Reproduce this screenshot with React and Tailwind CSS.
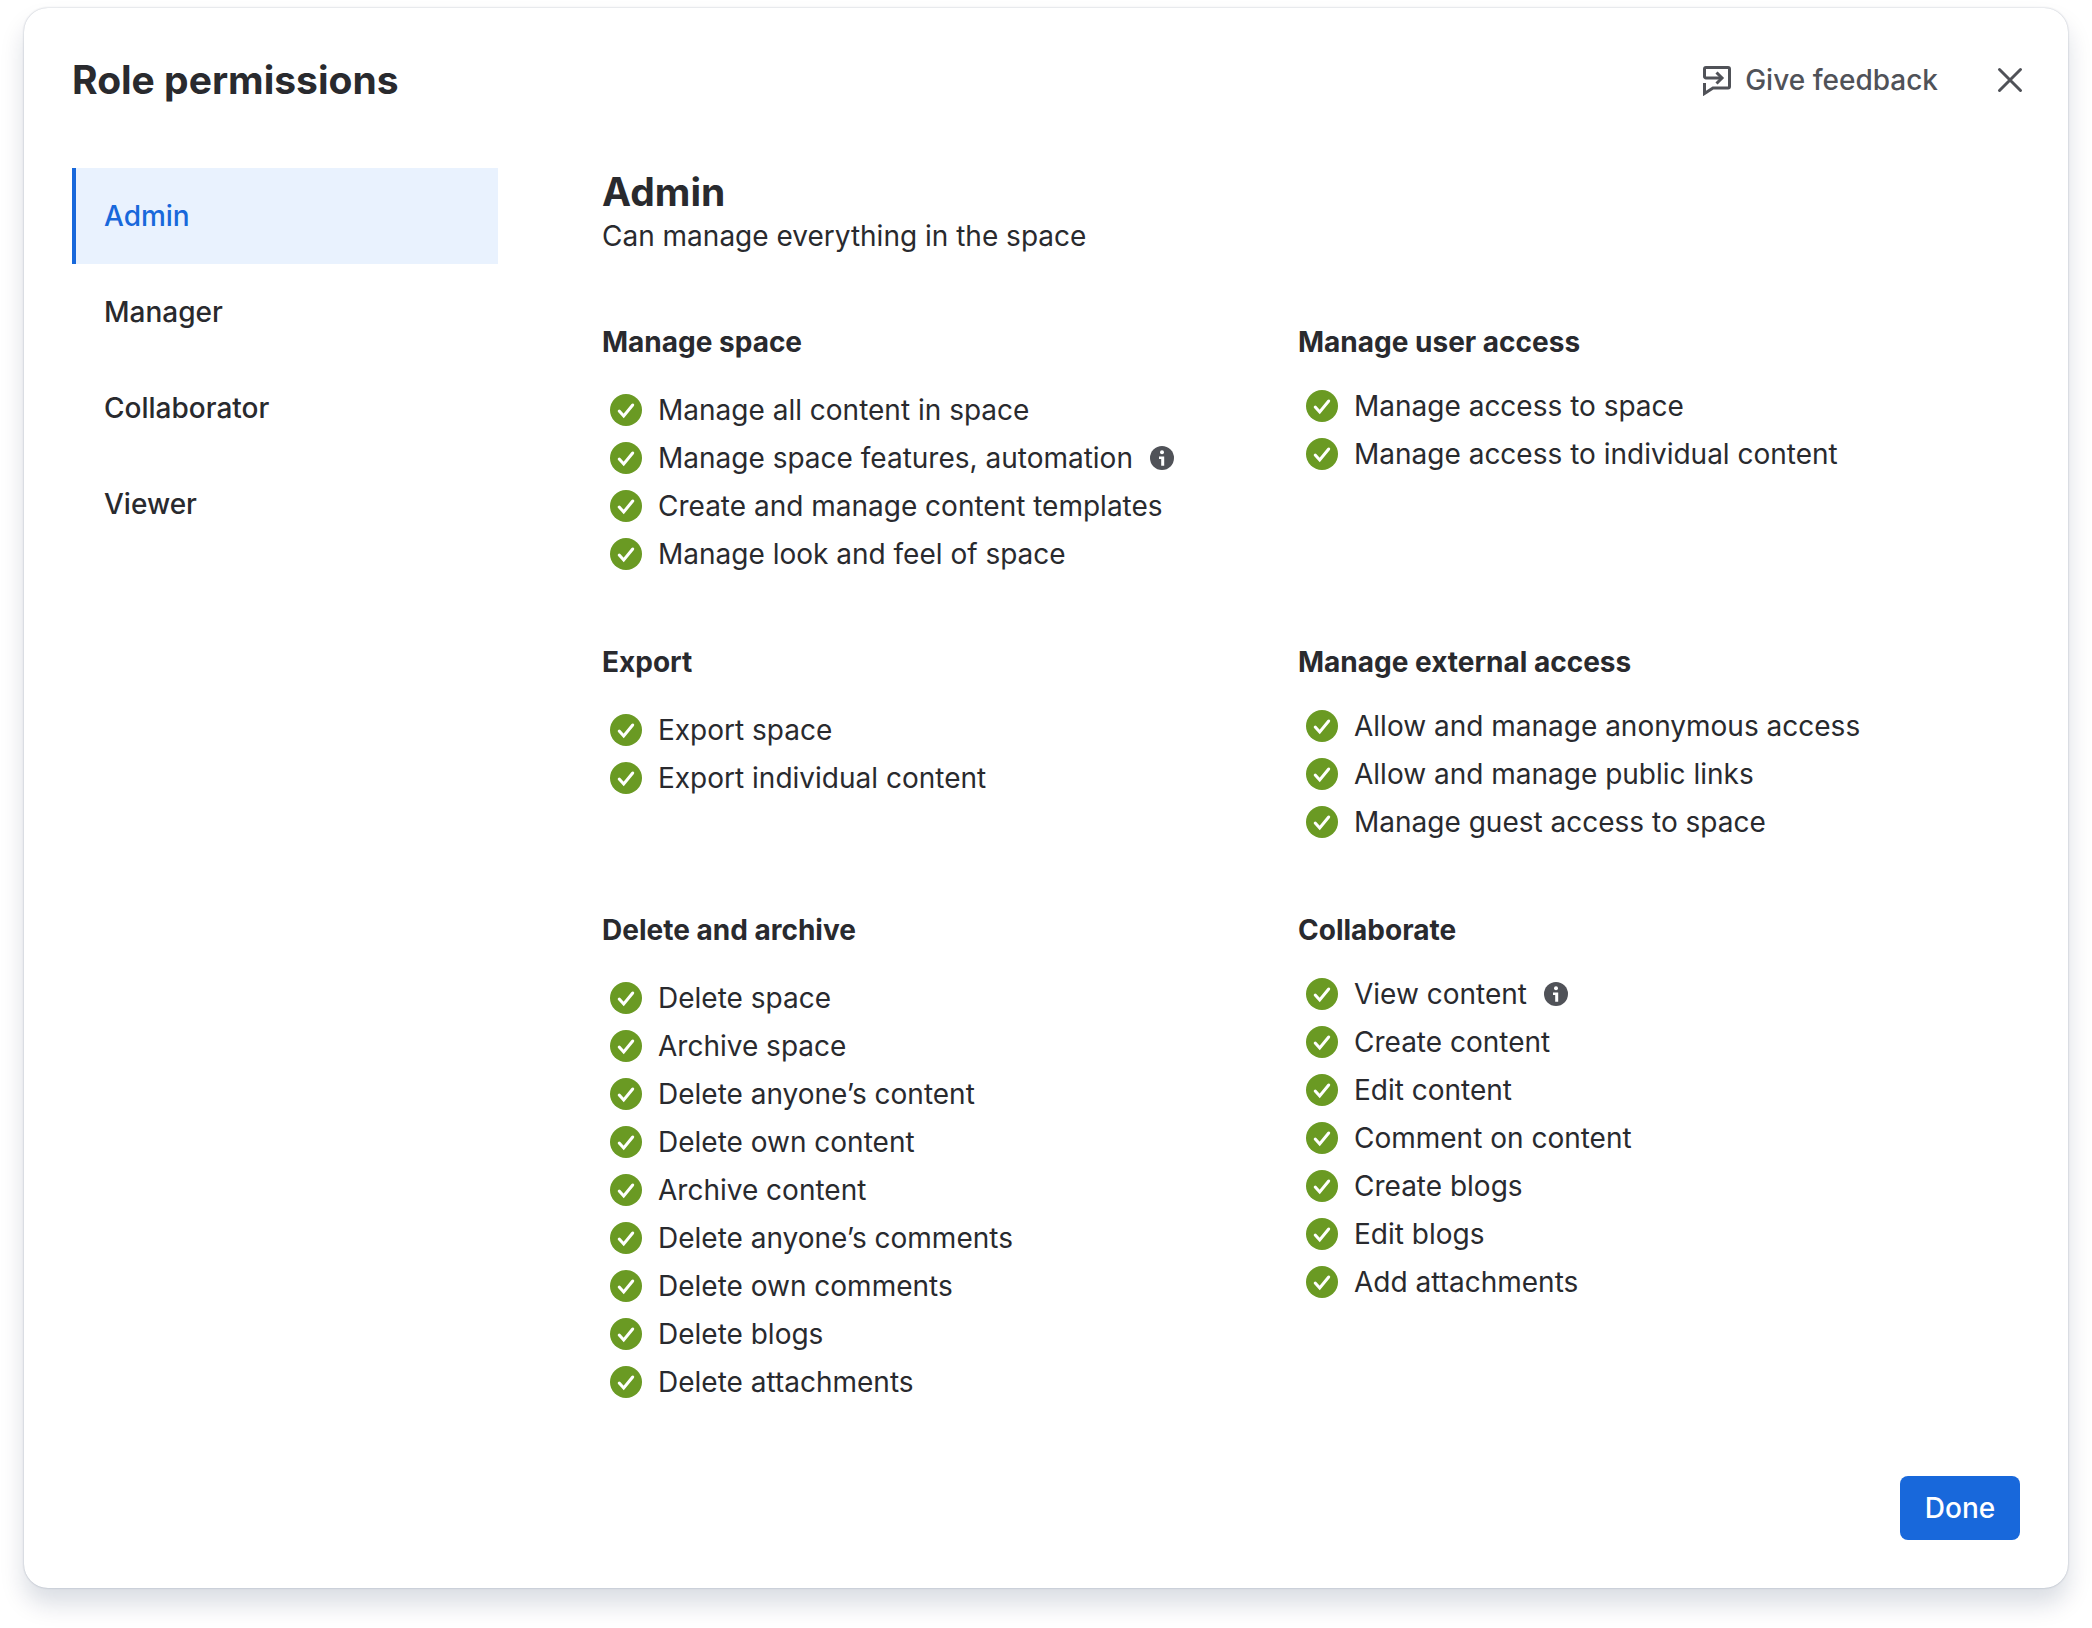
const ROLES = ["Admin", "Manager", "Collaborator", "Viewer"];

const ROWS = [
  [
    {
      title: "Manage space",
      items: [
        { text: "Manage all content in space" },
        { text: "Manage space features, automation", info: true },
        { text: "Create and manage content templates" },
        { text: "Manage look and feel of space" },
      ],
    },
    {
      title: "Manage user access",
      items: [{ text: "Manage access to space" }, { text: "Manage access to individual content" }],
    },
  ],
  [
    {
      title: "Export",
      items: [{ text: "Export space" }, { text: "Export individual content" }],
    },
    {
      title: "Manage external access",
      items: [
        { text: "Allow and manage anonymous access" },
        { text: "Allow and manage public links" },
        { text: "Manage guest access to space" },
      ],
    },
  ],
  [
    {
      title: "Delete and archive",
      items: [
        { text: "Delete space" },
        { text: "Archive space" },
        { text: "Delete anyone’s content" },
        { text: "Delete own content" },
        { text: "Archive content" },
        { text: "Delete anyone’s comments" },
        { text: "Delete own comments" },
        { text: "Delete blogs" },
        { text: "Delete attachments" },
      ],
    },
    {
      title: "Collaborate",
      items: [
        { text: "View content", info: true },
        { text: "Create content" },
        { text: "Edit content" },
        { text: "Comment on content" },
        { text: "Create blogs" },
        { text: "Edit blogs" },
        { text: "Add attachments" },
      ],
    },
  ],
];

function CheckIcon() {
  return (
    <svg className="size-8 shrink-0" viewBox="0 0 32 32" fill="none" aria-hidden="true">
      <circle cx="16" cy="16" r="16" fill="#6A9A23" />
      <path d="M9.200 17l4.500 5 9-11" stroke="#fff" strokeWidth="3" strokeLinecap="round" />
    </svg>
  );
}

function InfoIcon() {
  return (
    <svg className="size-6" viewBox="0 0 24 24" aria-hidden="true">
      <circle cx="12" cy="12" r="12" fill="#505258" />
      <circle cx="12" cy="6.200" r="2" fill="#fff" />
      <path d="M9 10.500h5.200v9.300h-3V13H9z" fill="#fff" />
    </svg>
  );
}

function FeedbackIcon() {
  return (
    <svg className="size-8" viewBox="0 0 32 32" fill="none" stroke="currentColor" strokeWidth="3" aria-hidden="true">
      <path d="M3.500 19v10.500l8.500-5.500H27a1.500 1.500 0 0 0 1.500-1.500V5A1.500 1.500 0 0 0 27 3.500H5A1.500 1.500 0 0 0 3.500 5v7.500a1.500 1.500 0 0 0 1.500 1.500h15" />
      <path d="M15.500 8.500L21 14l-5.500 5.500" />
    </svg>
  );
}

function CloseIcon() {
  return (
    <svg className="size-8" viewBox="0 0 32 32" fill="none" stroke="currentColor" strokeWidth="3" strokeLinecap="round" aria-hidden="true">
      <path d="M5.500 5.500l21 21M26.500 5.500l-21 21" />
    </svg>
  );
}

function Section({ title, items, spacing }) {
  return (
    <section>
      <h3 className="font-[653]">{title}</h3>
      <ul className={spacing}>
        {items.map((item) => (
          <li key={item.text} className="flex h-12 items-center pl-2">
            <CheckIcon />
            <span className="ml-4">{item.text}</span>
            {item.info && (
              <button type="button" aria-label={`About: ${item.text}`} className="ml-[17px]">
                <InfoIcon />
              </button>
            )}
          </li>
        ))}
      </ul>
    </section>
  );
}

export default function App() {
  return (
    <div className="bg-white px-6 pt-2 pb-10 font-['Inter',sans-serif] text-[28px] leading-10 text-[#292A2E]">
      <div
        role="dialog"
        aria-labelledby="dialog-title"
        className="rounded-3xl bg-white p-12 shadow-[0_16px_24px_rgba(9,30,66,0.15),0_0_2px_rgba(9,30,66,0.31)]"
      >
        <header className="flex h-12 items-center justify-between">
          <h1 id="dialog-title" className="text-[39px] leading-12 font-[653]">
            Role permissions
          </h1>
          <div className="flex items-center gap-14 text-[#505258]">
            <button type="button" className="flex items-center gap-3 font-medium">
              <FeedbackIcon />
              Give feedback
            </button>
            <button type="button" aria-label="Close" className="-mr-1.5">
              <CloseIcon />
            </button>
          </div>
        </header>

        <div className="mt-16 flex gap-[104px]">
          <nav aria-label="Roles" className="flex w-[426px] shrink-0 flex-col">
            {ROLES.map((role, i) => (
              <button
                key={role}
                type="button"
                aria-current={i === 0}
                className={
                  i === 0
                    ? "h-24 border-l-4 border-[#1868DB] bg-[#E9F2FE] pl-7 text-left font-medium text-[#1868DB]"
                    : "h-24 border-l-4 border-transparent pl-7 text-left font-medium"
                }
              >
                {role}
              </button>
            ))}
          </nav>

          <main className="flex-1 pr-[26px]">
            <h2 className="text-[39px] leading-12 font-[653]">Admin</h2>
            <p>Can manage everything in the space</p>
            <div className="mt-[66px] flex flex-col gap-16">
              {ROWS.map(([left, right]) => (
                <div key={left.title} className="grid grid-cols-2">
                  <Section {...left} spacing="mt-6" />
                  <Section {...right} spacing="mt-5" />
                </div>
              ))}
            </div>
          </main>
        </div>

        <footer className="mt-[70px] flex justify-end">
          <button type="button" className="h-16 min-w-30 rounded-lg bg-[#1868DB] px-6 font-medium text-white">
            Done
          </button>
        </footer>
      </div>
    </div>
  );
}
